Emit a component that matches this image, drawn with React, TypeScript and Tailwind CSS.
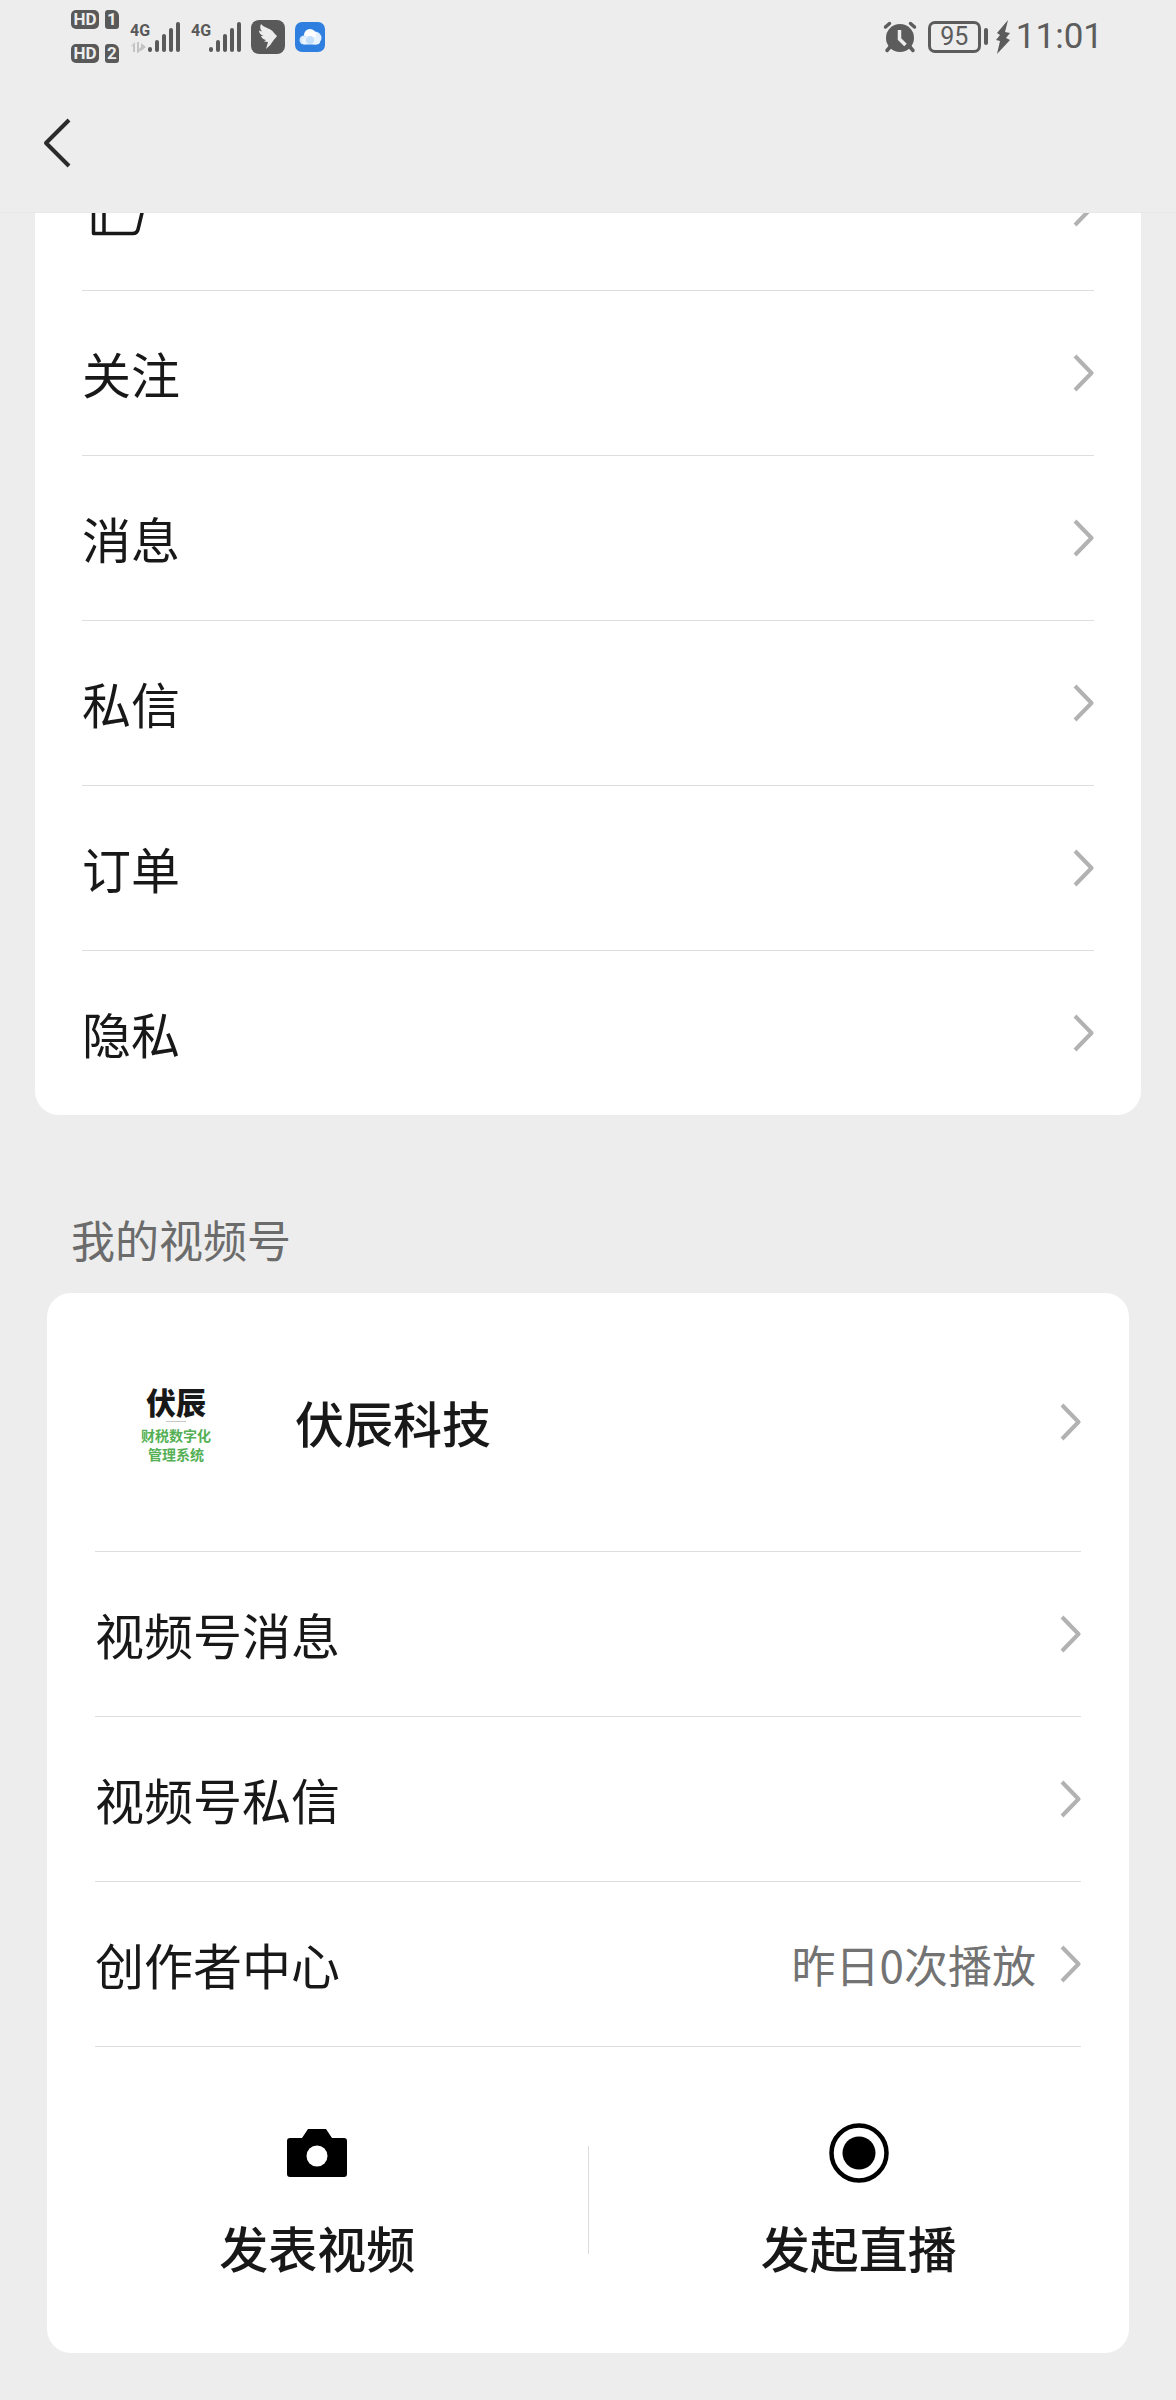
import type { ReactNode } from "react";

interface RowProps {
  children: ReactNode;
  extra?: string;
  label?: string;
  last?: boolean;
}

const menu = ["关注", "消息", "私信", "订单", "隐私"];

function Chevron() {
  return (
    <svg viewBox="0 0 21 38" className="h-[38px] w-[21px] shrink-0" fill="none">
      <path d="M2 2 18.5 19 2 36" stroke="#b2b2b2" strokeWidth="4" strokeLinejoin="round" />
    </svg>
  );
}

function Row({ children, extra, label, last }: RowProps) {
  return (
    <li className={last ? "" : "border-b border-[#dedede]"}>
      <button
        type="button"
        aria-label={label}
        className="flex h-[164px] w-full items-center justify-between text-left text-[49px] leading-[72px]"
      >
        <span>{children}</span>
        <span className="flex items-center gap-6">
          {extra && <span className="text-[44px] text-[#737373]">{extra}</span>}
          <Chevron />
        </span>
      </button>
    </li>
  );
}

function HdBadge({ sim }: { sim: string }) {
  return (
    <div className="flex h-[19px] gap-1.5 text-[17px] leading-[19px] font-bold text-[#ededed]">
      <span className="w-7 rounded-[5px] bg-[#595959] text-center">HD</span>
      <span className="w-3.5 rounded-[3px] rounded-tr-[6px] bg-[#595959] text-center">{sim}</span>
    </div>
  );
}

function Signal({ data }: { data?: boolean }) {
  return (
    <svg viewBox="0 0 52 34" className="h-[34px] w-[52px]" fill="#595959">
      <text x="0" y="16" fontSize="16" fontWeight="700" fontFamily="Roboto, sans-serif">
        4G
      </text>
      {data && (
        <g fill="#c4c4c4">
          <path d="M1 26l4-4v10H3v-7l-2 2zM7 22h2v7l4-4v3l-5 5H7z" />
          <path d="M11 23l5 4-5 4z" />
        </g>
      )}
      <rect x="18" y="27" width="4" height="5" rx="2" />
      <rect x="25" y="20" width="4" height="12" rx="2" />
      <rect x="32" y="14" width="4" height="18" rx="2" />
      <rect x="39" y="8" width="4" height="24" rx="2" />
      <rect x="46" y="2" width="4" height="30" rx="2" />
    </svg>
  );
}

function StatusBar() {
  return (
    <div className="flex h-[73px] items-center justify-between pr-[73px] pl-[71px] font-[Roboto,sans-serif]">
      <div className="flex items-center">
        <div className="flex flex-col gap-[15px]">
          <HdBadge sim="1" />
          <HdBadge sim="2" />
        </div>
        <div className="ml-[11px] flex gap-[9px]">
          <Signal data />
          <Signal />
        </div>
        <svg viewBox="0 0 34 34" className="ml-2 size-[34px]">
          <rect width="34" height="34" rx="8" fill="#595959" />
          <path
            d="M10 4C13 8 20 8 23 13L26 16C25 18 23 19 22 21Q20 25 15 29L17 22 13 21.500 15 20Q11 19 10 16L12.500 16Q8 14 8 10.500L11 11.500Q8 8 10 4Z"
            fill="#ededed"
          />
        </svg>
        <svg viewBox="0 0 30 30" className="ml-2.5 size-[30px]">
          <rect width="30" height="30" rx="7" fill="#2f7fe0" />
          <circle cx="20" cy="16" r="6.500" fill="#e4f1fd" />
          <circle cx="15" cy="13" r="6" fill="#ffffff" />
          <circle cx="9" cy="18" r="4.500" fill="#d3e8fb" />
          <rect x="7" y="15" width="18" height="7.500" rx="3.500" fill="#e9f4fe" />
          <circle cx="15" cy="18" r="4" fill="#c3defa" />
        </svg>
      </div>

      <div className="flex items-center text-[#5c5c5c]">
        <svg viewBox="0 0 34 32" className="h-8 w-[34px]" fill="none" stroke="currentColor">
          <circle cx="17" cy="17" r="14" fill="currentColor" stroke="none" />
          <path d="M2.500 6 6.500 2.500M31.500 6 27.500 2.500M7 26l-3 3.500M27 26l3 3.500" strokeWidth="3.500" strokeLinecap="round" />
          <path d="M16.500 9v9l6 6" stroke="#ededed" strokeWidth="3.500" />
        </svg>
        <div className="ml-[11px] flex h-8 w-[53px] items-center justify-center rounded-[7px] border-3 border-current text-[25px] leading-none">
          95
        </div>
        <div className="ml-[3px] h-[17px] w-1 rounded-sm bg-current" />
        <svg viewBox="0 0 14 34" className="ml-2 h-[34px] w-3.5" fill="currentColor">
          <path d="M12 0 1 13l3 2-4 5 4 1-3 13L14 20l-4-2 4-5-5-1z" />
        </svg>
        <time className="ml-1.5 text-[35px] leading-none">11:01</time>
      </div>
    </div>
  );
}

export default function App() {
  return (
    <div className="min-h-screen overflow-hidden bg-[#ededed] pb-[47px] font-['Noto_Sans_CJK_SC',sans-serif] text-[#181818]">
      <header className="relative z-10 border-b border-[#e8e8e8] bg-[#ededed]">
        <StatusBar />
        <nav className="flex h-[139px] items-center pl-[43px]">
          <button type="button" aria-label="返回">
            <svg viewBox="0 0 28 50" className="h-[50px] w-7" fill="none">
              <path d="M26 2 3 25l23 23" stroke="#2b2b2b" strokeWidth="4" strokeLinejoin="round" />
            </svg>
          </button>
        </nav>
      </header>

      <main>
        {/* the list is scrolled under the header */}
        <ul className="mx-[35px] -mt-[87px] rounded-3xl bg-white px-[47px]">
          <Row label="赞">
            <svg viewBox="0 0 64 58" className="ml-2 h-[58px] w-16" fill="none">
              <path
                d="M3.500 22v32.500H43q4 0 5-4l6-25q1-5-4-5H34l2-12q0-5-4-5-3 0-4 4L14 22H3.500M14 22v32"
                stroke="#181818"
                strokeWidth="3.500"
                strokeLinejoin="round"
              />
            </svg>
          </Row>
          {menu.map((item, i) => (
            <Row key={item} last={i === menu.length - 1}>
              {item}
            </Row>
          ))}
        </ul>

        <h2 className="px-[71px] pt-[92px] pb-[22px] text-[44px] leading-[64px] text-[#6b6b6b]">我的视频号</h2>

        <section className="mx-[47px] rounded-3xl bg-white px-12">
          <ul>
            <li className="border-b border-[#dedede]">
              <button type="button" className="flex h-[258px] w-full items-center text-left">
                <span className="flex w-[162px] shrink-0 flex-col items-center">
                  <span className="text-[30px] leading-[40px] font-black">伏辰</span>
                  <span className="h-px w-5 bg-[#c8c8c8]" />
                  <span className="pt-1 text-center text-[14px] leading-[19px] font-bold text-[#55b055]">
                    财税数字化
                    <br />
                    管理系统
                  </span>
                </span>
                <span className="ml-[38px] flex-1 text-[49px] leading-[72px] font-medium">伏辰科技</span>
                <Chevron />
              </button>
            </li>
            <Row>视频号消息</Row>
            <Row>视频号私信</Row>
            <Row extra="昨日0次播放">创作者中心</Row>
          </ul>

          <div className="-mx-12 flex h-[306px] items-center">
            <button type="button" className="flex flex-1 flex-col items-center gap-7 pt-1.5 text-[49px] leading-[72px] font-medium">
              <svg viewBox="0 0 60 60" className="size-[60px]">
                <path
                  d="M21 6h18l6 9h12q3 0 3 3v33q0 3-3 3H3q-3 0-3-3V18q0-3 3-3h12z"
                  fill="#000"
                />
                <circle cx="30" cy="33" r="10.500" fill="#fff" />
              </svg>
              发表视频
            </button>
            <div className="h-[108px] w-px bg-[#dcdcdc]" />
            <button type="button" className="flex flex-1 flex-col items-center gap-7 pt-1.5 text-[49px] leading-[72px] font-medium">
              <svg viewBox="0 0 60 60" className="size-[60px]">
                <circle cx="30" cy="30" r="27.500" fill="none" stroke="#000" strokeWidth="4.500" />
                <circle cx="30" cy="30" r="16.500" fill="#000" />
              </svg>
              发起直播
            </button>
          </div>
        </section>
      </main>
    </div>
  );
}
